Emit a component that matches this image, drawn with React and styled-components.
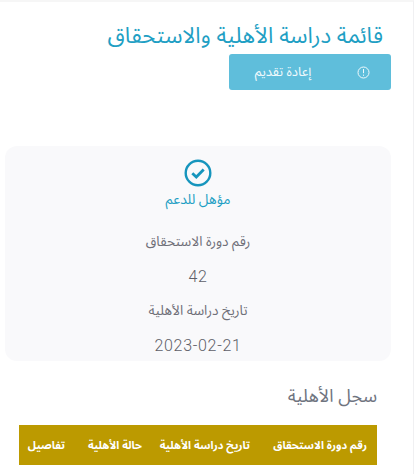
import React from "react";
import styled, { createGlobalStyle } from "styled-components";

const Global = createGlobalStyle`
  html, body { margin: 0; padding: 0; background: #fff; overflow: hidden; }
  body { font-family: "Noto Sans Arabic", "Noto Sans", "DejaVu Sans", sans-serif; }
`;

const Page = styled.div`
  width: 414px;
  height: 474px;
  box-sizing: border-box;
  overflow: hidden;
  background: #fff;
  border-right: 1px solid #f0f0f2;
  border-top: 2px solid #f6f6f6;
  direction: rtl;
`;

const Title = styled.h1`
  margin: 19px 30px 0 0;
  font-size: 22.3px;
  line-height: 30px;
  font-weight: 400;
  color: #1f9fc4;
`;

const RetryButton = styled.button`
  display: flex;
  align-items: center;
  justify-content: space-between;
  width: 162px;
  height: 36px;
  margin: 3px 22px 0 0;
  padding: 0 21px 0 23px;
  box-sizing: border-box;
  border: 0;
  border-radius: 3px;
  background: #5fbedb;
  color: #f1fafd;
  font-family: inherit;
  font-size: 13px;
  white-space: nowrap;
`;

const InfoIcon = () => (
  <svg width="13" height="13" viewBox="0 0 13 13" fill="none" stroke="#f1fafd" strokeWidth="1">
    <circle cx="6.5" cy="6.5" r="5.5" />
    <path d="M6.5 3v4.2M6.5 8.6v1.2" />
  </svg>
);

const ButtonLabel = styled.span`
  width: 62px;
  text-align: center;
`;

const Card = styled.section`
  display: flex;
  flex-direction: column;
  align-items: center;
  width: 386px;
  height: 215px;
  margin: 56px 22px 0 0;
  border-radius: 12px;
  background: #f9f9fb;
`;

const CheckIcon = () => (
  <svg width="28" height="28" viewBox="0 0 28 28" fill="none" stroke="#1695bd">
    <circle cx="14" cy="14" r="12.3" strokeWidth="2.4" />
    <path d="M8.3 14.2l4 3.8 7.4-7.6" strokeWidth="2.8" />
  </svg>
);

const StatusIcon = styled.div`
  height: 28px;
  margin-top: 13px;
`;

const Status = styled.div`
  margin-top: 4px;
  font-size: 13.8px;
  line-height: 18px;
  color: #1f9fc4;
`;

const Label = styled.div`
  margin-top: ${(p) => p.$top}px;
  font-size: 13.6px;
  line-height: 18px;
  color: #6f6f78;
`;

const Value = styled.div`
  margin-top: ${(p) => p.$top}px;
  font-family: Roboto, sans-serif;
  font-size: 16px;
  font-weight: 300;
  line-height: 20px;
  letter-spacing: 0.7px;
  color: #5f5f68;
`;

const SectionTitle = styled.h2`
  margin: 22px 36px 0 0;
  font-size: 18px;
  line-height: 26px;
  font-weight: 400;
  color: #6f7480;
`;

const Table = styled.div`
  display: grid;
  grid-template-columns: 117px 108px 77px auto;
  align-items: center;
  width: 358px;
  height: 40px;
  margin: 16px 36px 0 0;
  padding-right: 10px;
  box-sizing: border-box;
  background: #bc9a00;
`;

const HeadCell = styled.div`
  font-size: 11px;
  font-weight: 700;
  color: #fff;
  white-space: nowrap;
`;

const heads = ["رقم دورة الاستحقاق", "تاريخ دراسة الأهلية", "حالة الأهلية", "تفاصيل"];

export default function App() {
  return (
    <Page>
      <Global />
      <Title>قائمة دراسة الأهلية والاستحقاق</Title>
      <RetryButton>
        <InfoIcon />
        <ButtonLabel>إعادة تقديم</ButtonLabel>
      </RetryButton>
      <Card>
        <StatusIcon><CheckIcon /></StatusIcon>
        <Status>مؤهل للدعم</Status>
        <Label $top={24}>رقم دورة الاستحقاق</Label>
        <Value $top={16}>42</Value>
        <Label $top={15}>تاريخ دراسة الأهلية</Label>
        <Value $top={16}>2023-02-21</Value>
      </Card>
      <SectionTitle>سجل الأهلية</SectionTitle>
      <Table>
        {heads.map((h) => <HeadCell key={h}>{h}</HeadCell>)}
      </Table>
    </Page>
  );
}
